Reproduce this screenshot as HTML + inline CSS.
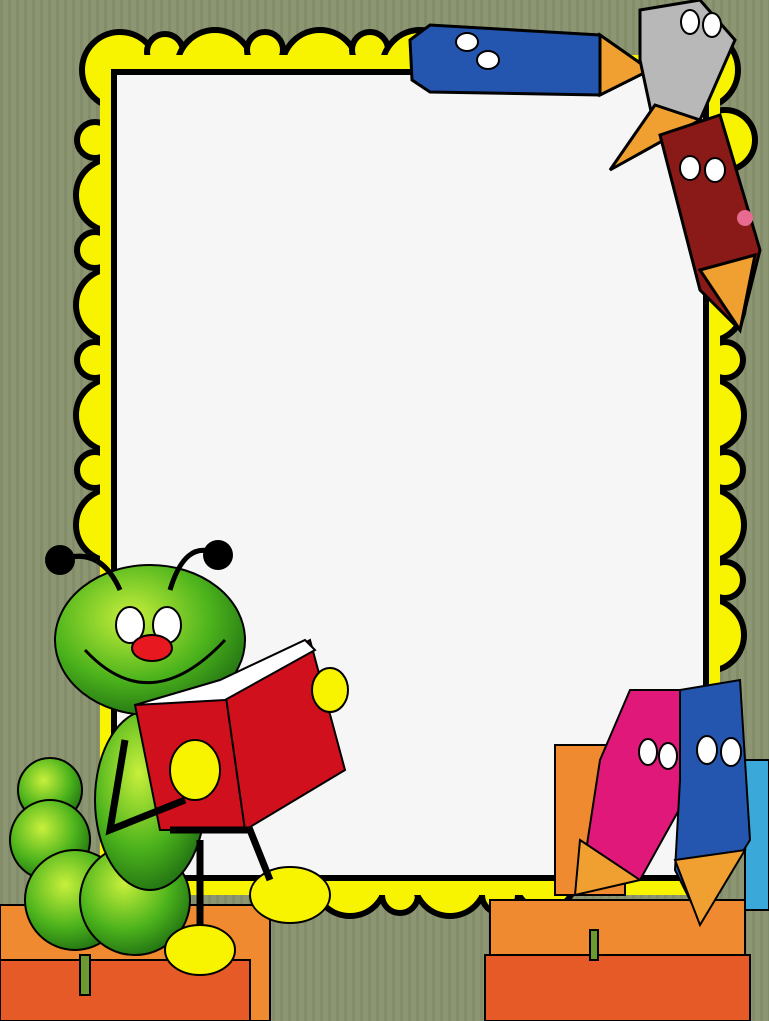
<!DOCTYPE html>
<html><head><meta charset="utf-8"><style>
html,body{margin:0;padding:0;width:769px;height:1021px;overflow:hidden;background:#8b9470}
svg{display:block}
</style></head><body>
<svg width="769" height="1021" viewBox="0 0 769 1021" xmlns="http://www.w3.org/2000/svg">
<defs>
<pattern id="st" width="8" height="10" patternUnits="userSpaceOnUse">
<rect width="8" height="10" fill="#8d9672"/><rect width="3" height="10" fill="#848d69"/>
</pattern>
<radialGradient id="gg" cx="0.4" cy="0.35" r="0.7"><stop offset="0" stop-color="#c8f03c"/><stop offset="0.6" stop-color="#4cb31c"/><stop offset="1" stop-color="#1f6e12"/></radialGradient>
</defs>
<rect width="769" height="1021" fill="url(#st)"/>
<g fill="#f8f400" stroke="#000" stroke-width="6">
<circle cx="120" cy="70" r="38"/><circle cx="165" cy="52" r="18"/><circle cx="215" cy="68" r="38"/><circle cx="265" cy="50" r="18"/><circle cx="320" cy="68" r="38"/><circle cx="370" cy="50" r="18"/><circle cx="420" cy="68" r="38"/>
<circle cx="700" cy="70" r="38"/><circle cx="725" cy="140" r="30"/>
<circle cx="95" cy="140" r="18"/><circle cx="112" cy="195" r="36"/><circle cx="95" cy="250" r="18"/><circle cx="112" cy="305" r="36"/><circle cx="95" cy="360" r="18"/><circle cx="112" cy="415" r="36"/><circle cx="95" cy="470" r="18"/><circle cx="112" cy="525" r="36"/>
<circle cx="725" cy="250" r="18"/><circle cx="708" cy="305" r="36"/><circle cx="725" cy="360" r="18"/><circle cx="708" cy="415" r="36"/><circle cx="725" cy="470" r="18"/><circle cx="708" cy="525" r="36"/><circle cx="725" cy="580" r="18"/><circle cx="708" cy="635" r="36"/>
<circle cx="350" cy="880" r="36"/><circle cx="400" cy="895" r="18"/><circle cx="450" cy="880" r="36"/><circle cx="500" cy="895" r="18"/><circle cx="545" cy="880" r="30"/>
</g>
<rect x="100" y="55" width="620" height="840" fill="#f8f400"/>
<rect x="114" y="72" width="592" height="806" fill="#f6f6f6" stroke="#000" stroke-width="6"/>
<g stroke="#000" stroke-width="3">
<polygon points="410,40 430,25 600,35 650,70 600,95 430,92 412,80" fill="#2456b0"/>
<polygon points="600,35 650,70 600,95" fill="#f0a030"/>
<polygon points="640,10 700,0 735,40 700,120 655,130 640,60" fill="#b8b8b8"/>
<polygon points="655,105 700,120 610,170" fill="#f0a030"/>
<polygon points="660,135 720,115 760,250 740,330 700,290" fill="#8a1a18"/>
<polygon points="700,270 755,255 740,330" fill="#f0a030"/>
</g>
<g fill="#fff" stroke="#000" stroke-width="2"><ellipse cx="467" cy="42" rx="11" ry="9"/><ellipse cx="488" cy="60" rx="11" ry="9"/><ellipse cx="690" cy="22" rx="9" ry="12"/><ellipse cx="712" cy="25" rx="9" ry="12"/><ellipse cx="690" cy="168" rx="10" ry="12"/><ellipse cx="715" cy="170" rx="10" ry="12"/></g>
<circle cx="745" cy="218" r="8" fill="#e86a90"/>
<g stroke="#000" stroke-width="2">
<rect x="745" y="760" width="24" height="150" fill="#3aa8d8"/>
<rect x="555" y="745" width="70" height="150" fill="#f08a30"/>
<rect x="490" y="900" width="255" height="55" fill="#f08a30"/>
<rect x="485" y="955" width="265" height="66" fill="#e65a28"/>
<rect x="590" y="930" width="8" height="30" fill="#6a9a30"/>
<polygon points="630,690 680,690 690,790 640,880 580,890 600,760" fill="#e0187a"/>
<polygon points="580,840 640,880 575,895" fill="#f0a030"/>
<polygon points="680,690 740,680 750,840 700,920 675,870 680,780" fill="#2456b0"/>
<polygon points="675,860 745,850 700,925" fill="#f0a030"/>
</g>
<g fill="#fff" stroke="#000" stroke-width="2"><ellipse cx="648" cy="752" rx="9" ry="13"/><ellipse cx="668" cy="756" rx="9" ry="13"/><ellipse cx="707" cy="750" rx="10" ry="14"/><ellipse cx="731" cy="752" rx="10" ry="14"/></g>
<g stroke="#000" stroke-width="2">
<rect x="0" y="905" width="270" height="116" fill="#f08a30"/>
<rect x="0" y="960" width="250" height="61" fill="#e65a28"/>
<rect x="80" y="955" width="10" height="40" fill="#6a9a30"/>
<circle cx="50" cy="790" r="32" fill="url(#gg)"/>
<circle cx="50" cy="840" r="40" fill="url(#gg)"/>
<circle cx="75" cy="900" r="50" fill="url(#gg)"/>
<circle cx="135" cy="900" r="55" fill="url(#gg)"/>
<ellipse cx="150" cy="800" rx="55" ry="90" fill="url(#gg)"/>
<ellipse cx="150" cy="640" rx="95" ry="75" fill="url(#gg)"/>
</g>
<g stroke="#000" stroke-width="5" fill="none"><path d="M120 590 Q100 545 60 560"/><path d="M170 590 Q185 540 215 553"/></g>
<circle cx="60" cy="560" r="15"/><circle cx="218" cy="555" r="15"/>
<g fill="#fff" stroke="#000" stroke-width="2"><ellipse cx="130" cy="625" rx="14" ry="18"/><ellipse cx="167" cy="625" rx="14" ry="18"/></g>
<ellipse cx="152" cy="648" rx="20" ry="13" fill="#e81820" stroke="#000" stroke-width="2"/>
<path d="M85 650 Q150 720 225 640" stroke="#000" stroke-width="3" fill="none"/>
<g stroke="#000" stroke-width="2">
<polygon points="135,705 225,690 245,830 160,830" fill="#d0101c"/>
<polygon points="225,690 310,640 345,770 245,830" fill="#d0101c"/>
<polygon points="135,705 220,680 305,640 315,650 225,700" fill="#fff"/>
<ellipse cx="330" cy="690" rx="18" ry="22" fill="#f8f400"/>
<ellipse cx="195" cy="770" rx="25" ry="30" fill="#f8f400"/>
<ellipse cx="290" cy="895" rx="40" ry="28" fill="#f8f400"/>
<ellipse cx="200" cy="950" rx="35" ry="25" fill="#f8f400"/>
</g>
<g stroke="#000" stroke-width="7" fill="none"><path d="M125 740 L110 830 L185 800"/><path d="M170 830 L250 830 L270 880"/><path d="M200 840 L200 925"/></g>
</svg>
</body></html>
